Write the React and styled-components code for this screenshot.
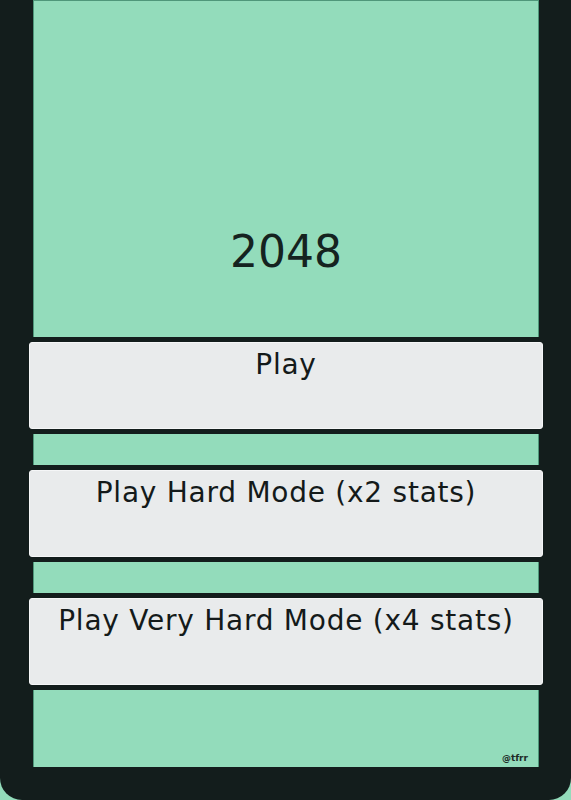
import React from "react";
import styled, { createGlobalStyle } from "styled-components";

const Global = createGlobalStyle`
  html, body { margin: 0; padding: 0; background: #93dcbb; }
  body { width: 571px; height: 800px; overflow: hidden; }
`;

const Frame = styled.div`
  width: 571px;
  height: 800px;
  box-sizing: border-box;
  background: #131d1c;
  border-radius: 0 0 22px 22px;
  padding: 0 28px 33px 29px;
`;

const Column = styled.div`
  height: 100%;
  display: flex;
  flex-direction: column;
  gap: 5px;
`;

const Panel = styled.div`
  margin: 0 4px;
  background: #93dcbb;
  border: 1px solid #4f977a;
  border-width: ${(p) => (p.$top ? "1px 1px 0 1px" : "0 1px")};
  height: ${(p) => p.$h}px;
  flex: ${(p) => (p.$grow ? "1 1 auto" : "0 0 auto")};
  box-sizing: border-box;
  display: flex;
  flex-direction: column;
  position: relative;
`;

const Title = styled.h1`
  margin: 0;
  margin-top: auto;
  padding-bottom: 59px;
  text-align: center;
  font-family: "DejaVu Sans", sans-serif;
  font-weight: 400;
  font-size: 44px;
  line-height: 52px;
  color: #15231f;
`;

const Button = styled.button`
  flex: 0 0 auto;
  height: 87px;
  box-sizing: border-box;
  background: #e9ebec;
  border: 1px solid #f5f6f7;
  border-radius: 3px;
  padding: 6px 0 0;
  display: flex;
  justify-content: center;
  align-items: flex-start;
  font-family: "DejaVu Sans", sans-serif;
  font-size: 28px;
  line-height: 32px;
  letter-spacing: 0.75px;
  font-weight: 400;
  color: #141a1a;
  cursor: pointer;
`;

const Credit = styled.span`
  position: absolute;
  right: 10px;
  bottom: 4px;
  font-family: "DejaVu Sans", sans-serif;
  font-weight: 700;
  font-size: 9px;
  color: #1d2b27;
`;

export default function App() {
  return (
    <>
      <Global />
      <Frame>
        <Column>
          <Panel $top $h={337}>
            <Title>2048</Title>
          </Panel>
          <Button>Play</Button>
          <Panel $h={31} />
          <Button>Play Hard Mode (x2 stats)</Button>
          <Panel $h={31} />
          <Button>Play Very Hard Mode (x4 stats)</Button>
          <Panel $grow>
            <Credit>@tfrr</Credit>
          </Panel>
        </Column>
      </Frame>
    </>
  );
}
